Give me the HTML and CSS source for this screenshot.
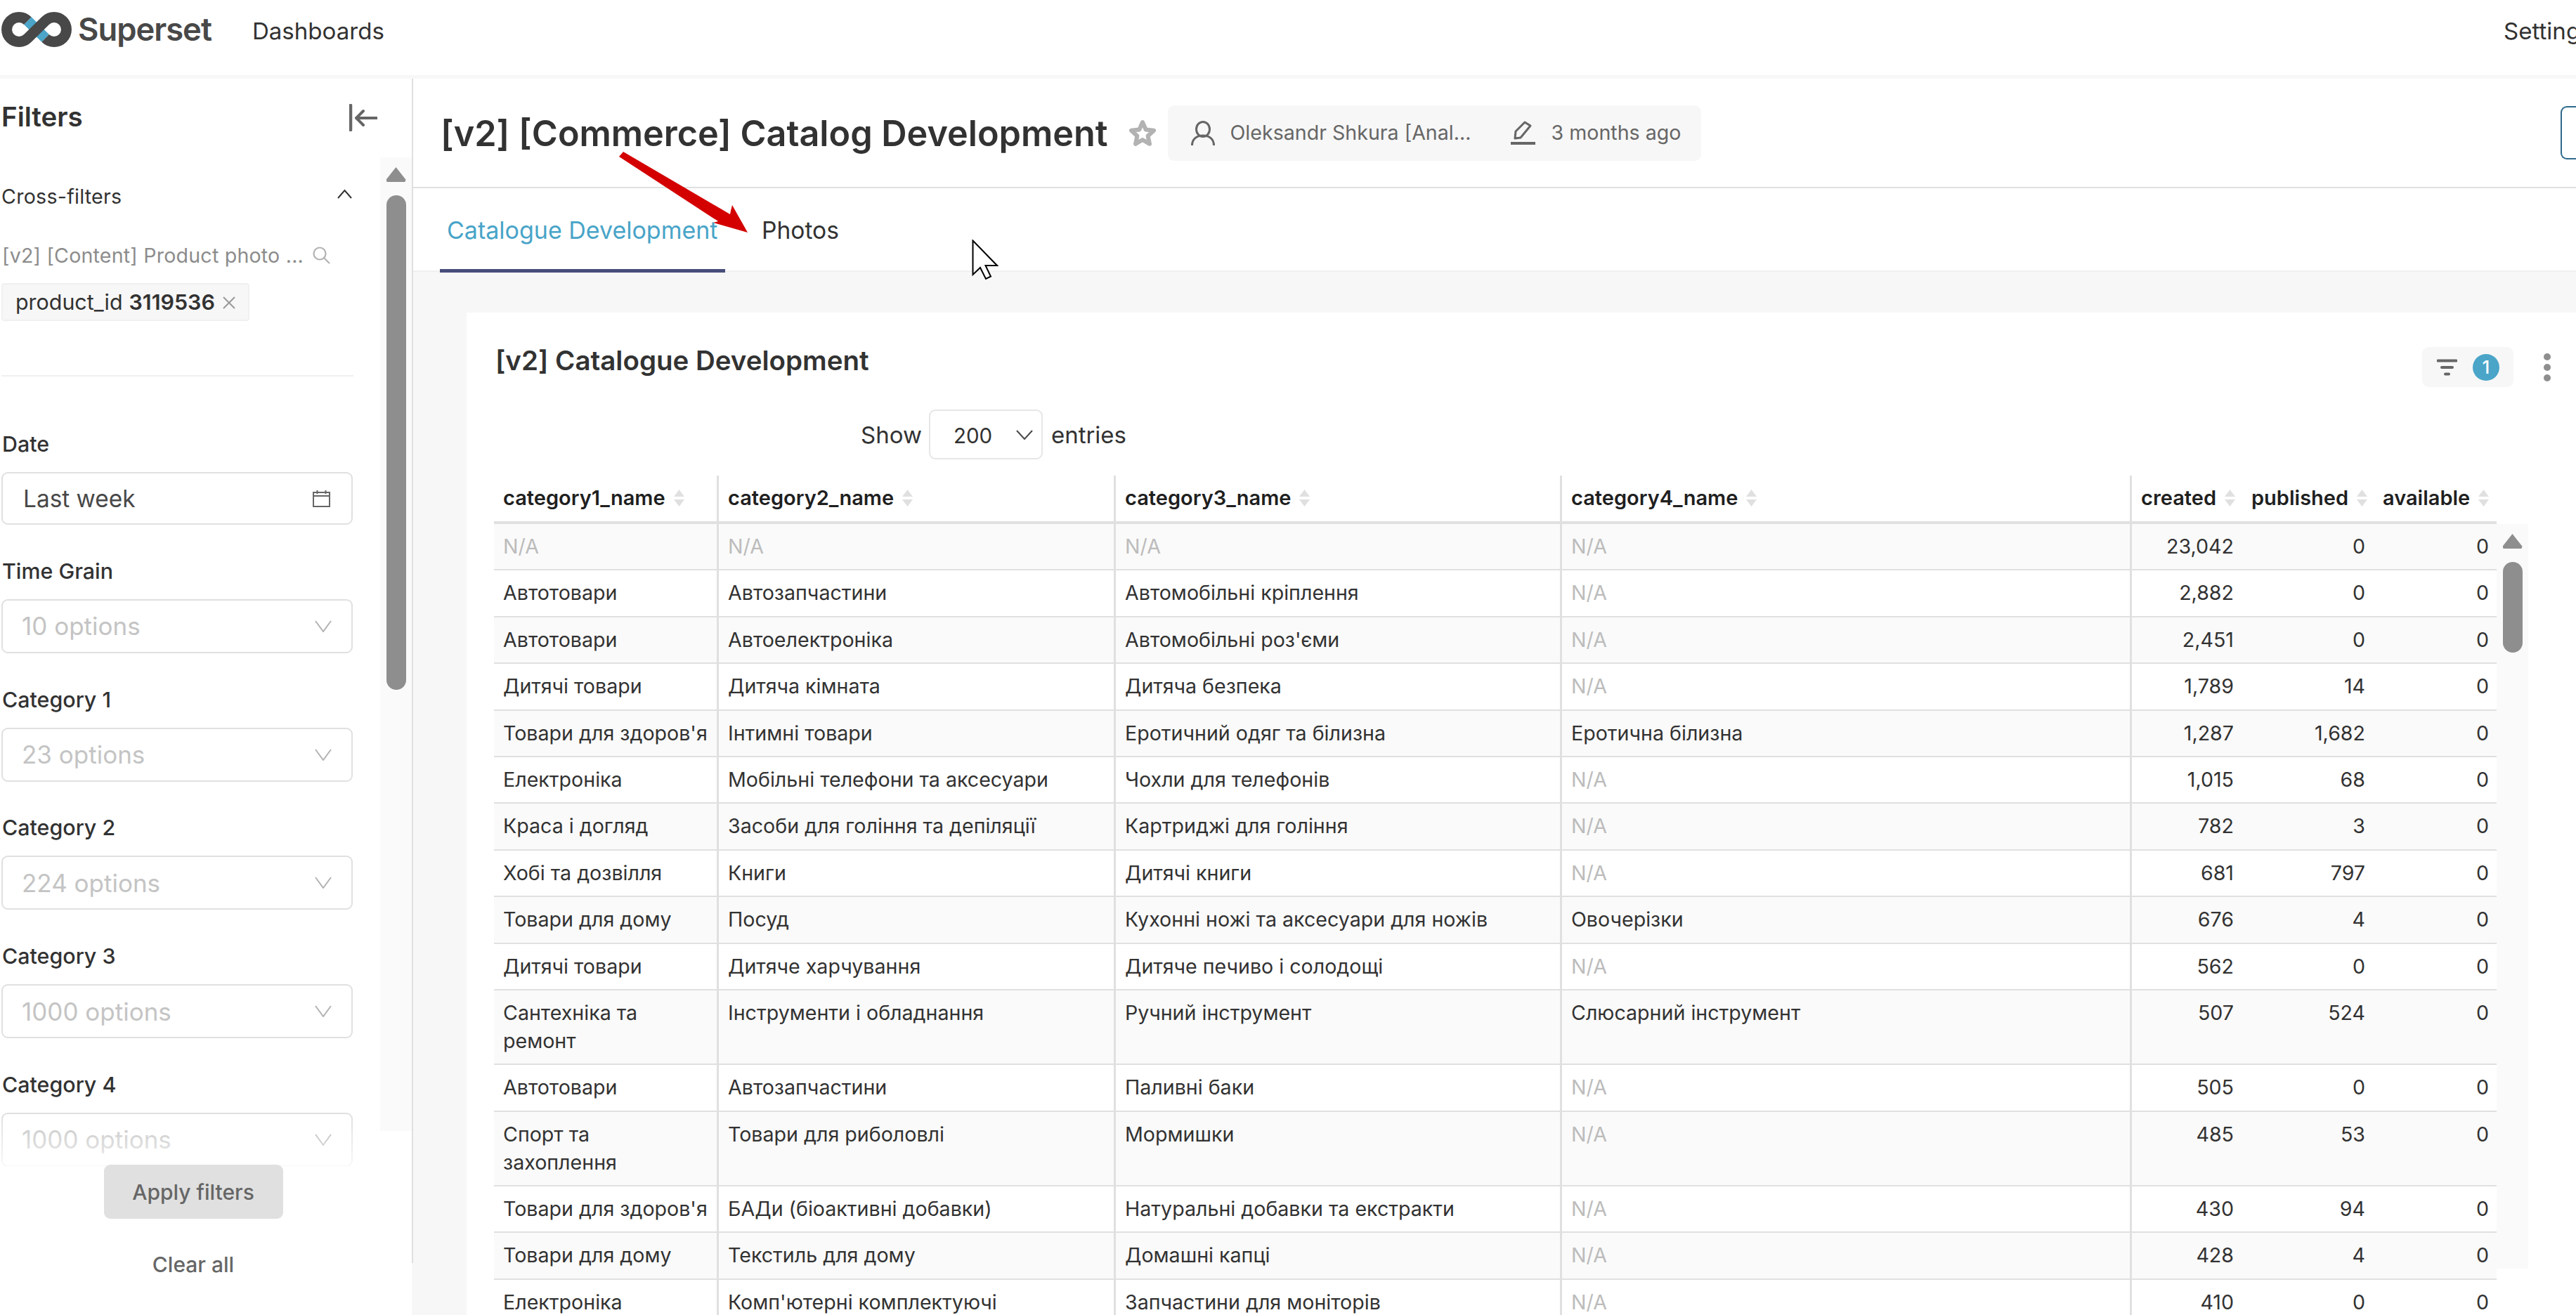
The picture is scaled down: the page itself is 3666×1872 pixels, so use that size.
FILE: index.html
```html
<!DOCTYPE html>
<html lang="en">
<head>
<meta charset="utf-8">
<title>[v2] [Commerce] Catalog Development</title>
<link rel="stylesheet" href="styles.css">
</head>
<body>
<nav class="nav">
  <div class="brand">
    <svg class="logo" viewBox="0 0 100 50" aria-hidden="true">
      <path class="logo-blue" d="M37.4 12.6L62.6 37.4"/>
      <path class="logo-dark" d="M37.4 12.6A17.5 17.5 0 1 0 37.4 37.4L62.6 12.6A17.5 17.5 0 1 1 62.6 37.4"/>
    </svg>
    <span class="brand-name">Superset</span>
  </div>
  <a class="nav-link">Dashboards</a>
  <a class="nav-settings">Settings</a>
</nav>
<div class="band"></div>
<div class="layout">
  <aside class="sidebar">
    <div class="fb-head">
      <h2 class="fb-title">Filters</h2>
      <svg class="ic-collapse" viewBox="0 0 40 39" aria-hidden="true">
        <path d="M2 2V37" class="s-bar"/>
        <path d="M39 20H12M20 10L10 20L20 30" class="s-arrow"/>
      </svg>
    </div>
    <div class="fb-body">
      <div class="fb-scroll">
        <div class="cf-row">
          <span>Cross-filters</span>
          <svg class="ic-caret" viewBox="0 0 21 14" aria-hidden="true"><path d="M1 13L10.5 2L20 13"/></svg>
        </div>
        <div class="cf-source">
          <span class="cf-source-text">[v2] [Content] Product photo ...</span>
          <svg class="ic-search" viewBox="0 0 25 25" aria-hidden="true"><circle cx="10" cy="10" r="8.5"/><path d="M16 16L24 24"/></svg>
        </div>
        <div class="chip">
          <span>product_id</span><b class="chip-val">3119536</b>
          <svg class="ic-x" viewBox="0 0 18 18" aria-hidden="true"><path d="M1 1L17 17M17 1L1 17"/></svg>
        </div>
        <div class="divider"></div>

        <div class="field field-date">
          <label class="field-label">Date</label>
          <div class="input input-date">
            <span>Last week</span>
            <svg class="ic-cal" viewBox="0 0 25 25" aria-hidden="true"><path d="M1 4H24V24H1ZM1 9H24M6.5 1V6M18.500 1V6"/></svg>
          </div>
        </div>
        <div class="field">
          <label class="field-label">Time Grain</label>
          <div class="input"><span class="ph">10 options</span><svg class="ic-chev" viewBox="0 0 24 17" aria-hidden="true"><path d="M1 1L12 16L23 1"/></svg></div>
        </div>
        <div class="field">
          <label class="field-label">Category 1</label>
          <div class="input"><span class="ph">23 options</span><svg class="ic-chev" viewBox="0 0 24 17" aria-hidden="true"><path d="M1 1L12 16L23 1"/></svg></div>
        </div>
        <div class="field">
          <label class="field-label">Category 2</label>
          <div class="input"><span class="ph">224 options</span><svg class="ic-chev" viewBox="0 0 24 17" aria-hidden="true"><path d="M1 1L12 16L23 1"/></svg></div>
        </div>
        <div class="field">
          <label class="field-label">Category 3</label>
          <div class="input"><span class="ph">1000 options</span><svg class="ic-chev" viewBox="0 0 24 17" aria-hidden="true"><path d="M1 1L12 16L23 1"/></svg></div>
        </div>
        <div class="field">
          <label class="field-label">Category 4</label>
          <div class="input"><span class="ph">1000 options</span><svg class="ic-chev" viewBox="0 0 24 17" aria-hidden="true"><path d="M1 1L12 16L23 1"/></svg></div>
        </div>
      </div>
      <div class="vscroll vscroll-side">
        <span class="vscroll-up"></span>
        <span class="vscroll-thumb vscroll-thumb-side"></span>
      </div>
    </div>
    <div class="fb-foot">
      <button class="btn-apply">Apply filters</button>
      <button class="btn-clear">Clear all</button>
    </div>
  </aside>
  <div class="rail"></div>
  <main class="main">
    <header class="head">
      <h1 class="title">[v2] [Commerce] Catalog Development</h1>
      <svg class="ic-star" viewBox="0 0 40 38" aria-hidden="true"><path d="M20 4L24.700 14.500L36 15.800L27.600 23.500L30 34.800L20 29L10 34.800L12.400 23.500L4 15.800L15.300 14.500Z"/></svg>
      <div class="meta">
        <svg class="ic-user" viewBox="0 0 34 35" aria-hidden="true"><ellipse cx="17" cy="12" rx="9.500" ry="10.500"/><path d="M1.500 35C1.500 26 8 21 17 21S32.500 26 32.500 35"/></svg>
        <span class="meta-name">Oleksandr Shkura [Anal...</span>
        <svg class="ic-pencil" viewBox="0 0 35 34" aria-hidden="true"><path class="pen" d="M6 25L7 15L20 2L28 7L14 24Z"/><path class="pen-line" d="M0 32H35"/></svg>
        <span class="meta-time">3 months ago</span>
      </div>
      <div class="edit-btn"></div>
    </header>
    <div class="tabs">
      <a class="tab tab-active">Catalogue Development</a>
      <a class="tab tab-photos">Photos</a>
    </div>
    <section class="canvas">
      <article class="card">
        <div class="card-head">
          <h3 class="card-title">[v2] Catalogue Development</h3>
          <div class="filter-pill">
            <svg class="ic-filter" viewBox="0 0 29 24" aria-hidden="true"><path d="M1.500 2.500H27.500M7 12H22M12 21.500H17"/></svg>
            <span class="badge">1</span>
          </div>
          <div class="kebab"><i></i><i></i><i></i></div>
        </div>
        <div class="show-row">
          <span>Show</span>
          <div class="page-select"><span>200</span><svg class="ic-chev-sm" viewBox="0 0 24 14" aria-hidden="true"><path d="M1 1L12 13L23 1"/></svg></div>
          <span>entries</span>
        </div>
        <div class="table-wrap">
          <table class="grid">
            <colgroup>
              <col class="c1"><col class="c2"><col class="c3"><col class="c4"><col class="c5"><col class="c6"><col class="c7">
            </colgroup>
            <thead>
              <tr>
                <th><span class="th-in">category1_name<svg class="ic-sort" viewBox="0 0 17 24" aria-hidden="true"><path d="M8.500 0L16 10H1ZM8.500 24L1 14H16Z"/></svg></span></th>
                <th class="vl"><span class="th-in">category2_name<svg class="ic-sort" viewBox="0 0 17 24" aria-hidden="true"><path d="M8.500 0L16 10H1ZM8.500 24L1 14H16Z"/></svg></span></th>
                <th class="vl"><span class="th-in">category3_name<svg class="ic-sort" viewBox="0 0 17 24" aria-hidden="true"><path d="M8.500 0L16 10H1ZM8.500 24L1 14H16Z"/></svg></span></th>
                <th class="vl"><span class="th-in">category4_name<svg class="ic-sort" viewBox="0 0 17 24" aria-hidden="true"><path d="M8.500 0L16 10H1ZM8.500 24L1 14H16Z"/></svg></span></th>
                <th class="vl"><span class="th-in">created<svg class="ic-sort" viewBox="0 0 17 24" aria-hidden="true"><path d="M8.500 0L16 10H1ZM8.500 24L1 14H16Z"/></svg></span></th>
                <th class="plain"><span class="th-in">published<svg class="ic-sort" viewBox="0 0 17 24" aria-hidden="true"><path d="M8.500 0L16 10H1ZM8.500 24L1 14H16Z"/></svg></span></th>
                <th class="plain"><span class="th-in">available<svg class="ic-sort" viewBox="0 0 17 24" aria-hidden="true"><path d="M8.500 0L16 10H1ZM8.500 24L1 14H16Z"/></svg></span></th>
              </tr>
            </thead>
            <tbody>
              <tr><td class="na">N/A</td><td class="vl na">N/A</td><td class="vl na">N/A</td><td class="vl na">N/A</td><td class="vl num">23,042</td><td class="num">0</td><td class="num">0</td></tr>
              <tr><td>Автотовари</td><td class="vl">Автозапчастини</td><td class="vl">Автомобільні кріплення</td><td class="vl na">N/A</td><td class="vl num">2,882</td><td class="num">0</td><td class="num">0</td></tr>
              <tr><td>Автотовари</td><td class="vl">Автоелектроніка</td><td class="vl">Автомобільні роз'єми</td><td class="vl na">N/A</td><td class="vl num">2,451</td><td class="num">0</td><td class="num">0</td></tr>
              <tr><td>Дитячі товари</td><td class="vl">Дитяча кімната</td><td class="vl">Дитяча безпека</td><td class="vl na">N/A</td><td class="vl num">1,789</td><td class="num">14</td><td class="num">0</td></tr>
              <tr><td>Товари для здоров'я</td><td class="vl">Інтимні товари</td><td class="vl">Еротичний одяг та білизна</td><td class="vl">Еротична білизна</td><td class="vl num">1,287</td><td class="num">1,682</td><td class="num">0</td></tr>
              <tr><td>Електроніка</td><td class="vl">Мобільні телефони та аксесуари</td><td class="vl">Чохли для телефонів</td><td class="vl na">N/A</td><td class="vl num">1,015</td><td class="num">68</td><td class="num">0</td></tr>
              <tr><td>Краса і догляд</td><td class="vl">Засоби для гоління та депіляції</td><td class="vl">Картриджі для гоління</td><td class="vl na">N/A</td><td class="vl num">782</td><td class="num">3</td><td class="num">0</td></tr>
              <tr><td>Хобі та дозвілля</td><td class="vl">Книги</td><td class="vl">Дитячі книги</td><td class="vl na">N/A</td><td class="vl num">681</td><td class="num">797</td><td class="num">0</td></tr>
              <tr><td>Товари для дому</td><td class="vl">Посуд</td><td class="vl">Кухонні ножі та аксесуари для ножів</td><td class="vl">Овочерізки</td><td class="vl num">676</td><td class="num">4</td><td class="num">0</td></tr>
              <tr><td>Дитячі товари</td><td class="vl">Дитяче харчування</td><td class="vl">Дитяче печиво і солодощі</td><td class="vl na">N/A</td><td class="vl num">562</td><td class="num">0</td><td class="num">0</td></tr>
              <tr><td>Сантехніка та ремонт</td><td class="vl">Інструменти і обладнання</td><td class="vl">Ручний інструмент</td><td class="vl">Слюсарний інструмент</td><td class="vl num">507</td><td class="num">524</td><td class="num">0</td></tr>
              <tr><td>Автотовари</td><td class="vl">Автозапчастини</td><td class="vl">Паливні баки</td><td class="vl na">N/A</td><td class="vl num">505</td><td class="num">0</td><td class="num">0</td></tr>
              <tr><td>Спорт та захоплення</td><td class="vl">Товари для риболовлі</td><td class="vl">Мормишки</td><td class="vl na">N/A</td><td class="vl num">485</td><td class="num">53</td><td class="num">0</td></tr>
              <tr><td>Товари для здоров'я</td><td class="vl">БАДи (біоактивні добавки)</td><td class="vl">Натуральні добавки та екстракти</td><td class="vl na">N/A</td><td class="vl num">430</td><td class="num">94</td><td class="num">0</td></tr>
              <tr><td>Товари для дому</td><td class="vl">Текстиль для дому</td><td class="vl">Домашні капці</td><td class="vl na">N/A</td><td class="vl num">428</td><td class="num">4</td><td class="num">0</td></tr>
              <tr><td>Електроніка</td><td class="vl">Комп'ютерні комплектуючі</td><td class="vl">Запчастини для моніторів</td><td class="vl na">N/A</td><td class="vl num">410</td><td class="num">0</td><td class="num">0</td></tr>
            </tbody>
          </table>
          <div class="vscroll vscroll-table">
            <span class="vscroll-up vscroll-up-table"></span>
            <span class="vscroll-thumb vscroll-thumb-table"></span>
          </div>
        </div>
      </article>
    </section>
  </main>
</div>

<svg class="annot-arrow" viewBox="0 0 200 130" aria-hidden="true">
  <polygon points="7,0 1,7 142,99 135,101 184,115 162,76 160,84 159,89"/>
</svg>
<svg class="annot-cursor" viewBox="0 0 38 58" aria-hidden="true">
  <path d="M1.500 1.500V50L12 40L20 56L27 52.500L19.500 37H36Z"/>
</svg>
</body>
</html>
```

FILE: styles.css
```css
* { box-sizing: border-box; }
html, body { margin: 0; padding: 0; }
body {
  width: 3666px;
  height: 1872px;
  overflow: hidden;
  position: relative;
  background: #fff;
  font-family: Inter, "Noto Sans", sans-serif;
  font-size: 28.6px;
  line-height: 40px;
  color: #323232;
}
h1, h2, h3 { margin: 0; }
svg { display: block; flex-shrink: 0; fill: none; }

/* top nav */
.nav { height: 107px; display: flex; align-items: center; padding-left: 2px; overflow: hidden; }
.brand { display: flex; align-items: center; margin-top: -24px; }
.logo { width: 100px; height: 50px; }
.logo-blue { stroke: #4aa5c8; stroke-width: 15px; }
.logo-dark { stroke: #484848; stroke-width: 15px; }
.brand-name { margin-left: 9px; font-size: 45.3px; line-height: 56px; font-weight: 600; color: #484848; letter-spacing: -1px; }
.nav-link { margin-left: 58px; margin-top: -19px; font-size: 33.1px; color: #323232; }
.nav-settings { margin-left: auto; margin-top: -19px; width: 103px; white-space: nowrap; font-size: 33.1px; color: #323232; }
.band { height: 5px; background: #f7f7f7; }

.layout { display: flex; height: 1760px; background: #f7f7f7; }

/* filter sidebar */
.sidebar { width: 586px; flex-shrink: 0; background: #fff; }
.rail { width: 2px; height: 1686px; background: #e0e0e0; flex-shrink: 0; }
.fb-head { height: 108px; display: flex; align-items: center; justify-content: space-between; padding: 0 49px 0 2px; }
.fb-title { font-size: 38.5px; line-height: 44px; font-weight: 600; color: #323232; }
.ic-collapse { width: 40px; height: 39px; margin-top: 2px; }
.s-bar { stroke: #666; stroke-width: 4.5px; stroke-linecap: round; }
.s-arrow { stroke: #666; stroke-width: 4px; stroke-linecap: round; stroke-linejoin: round; }
.fb-body { margin-top: 4px; height: 1436px; display: flex; align-items: flex-start; }
.fb-scroll { position: relative; width: 541px; height: 1436px; overflow: hidden; padding-left: 2px; }
.fb-scroll::after {
  content: "";
  position: absolute;
  left: 0; right: 0; bottom: 0;
  height: 72px;
  background: linear-gradient(rgba(255,255,255,0), rgba(255,255,255,.75));
}
.cf-row { margin-top: 36px; height: 40px; display: flex; align-items: center; justify-content: space-between; width: 499px; color: #323232; }
.cf-row span { margin-left: 0; letter-spacing: .25px; }
.ic-caret { width: 21px; height: 14px; margin-top: -8px; }
.ic-caret path { stroke: #323232; stroke-width: 2px; }
.cf-source { margin-top: 44px; height: 40px; display: flex; align-items: center; }
.cf-source-text { margin-left: 1px; width: 442px; color: #8c8c8c; white-space: nowrap; letter-spacing: .2px; }
.ic-search { width: 25px; height: 25px; margin-top: -1px; }
.ic-search circle, .ic-search path { stroke: #b2b2b2; stroke-width: 2.2px; }
.chip { margin-top: 19px; width: 353px; height: 54px; display: flex; align-items: center; padding-left: 18px; background: #f7f7f7; border: 2px solid #f0f0f0; border-radius: 4px; font-size: 30.4px; }
.chip-val { margin-left: 9px; font-weight: 600; color: #323232; }
.ic-x { width: 18px; height: 18px; margin-left: 11px; margin-top: 2px; }
.ic-x path { stroke: #999; stroke-width: 2px; }
.divider { margin-top: 77px; width: 501px; height: 2px; background: #f0f0f0; }

.field { margin-top: 45.750px; }
.field-date { margin-top: 76px; margin-bottom: 1.250px; }
.field-label { display: block; height: 40px; font-weight: 500; font-size: 30.4px; color: #323232; margin-left: 1px; }
.input { margin-top: 20px; width: 500px; height: 77px; display: flex; align-items: center; justify-content: space-between; padding: 0 28px 0 27px; background: #fff; border: 2.300px solid #e0e0e0; border-radius: 9px; font-size: 35px; }
.input-date { margin-top: 20px; height: 75px; padding-right: 30px; padding-left: 29px; color: #484848; font-size: 33.4px; }
.ph { color: #c4c4c4; }
.ic-cal { width: 25px; height: 25px; }
.ic-cal path { stroke: #666; stroke-width: 2px; }
.ic-chev { width: 24px; height: 17px; }
.ic-chev path { stroke: #b2b2b2; stroke-width: 2px; }

.vscroll { flex-shrink: 0; width: 45px; background: #fafafa; display: flex; flex-direction: column; align-items: center; }
.vscroll-side { height: 1386px; padding-top: 14px; }
.vscroll-up { width: 28px; height: 21px; background: #8e8e8e; clip-path: polygon(50% 0, 100% 85%, 96% 100%, 4% 100%, 0 85%); }
.vscroll-thumb { width: 28px; background: #8e8e8e; border-radius: 14px; }
.vscroll-thumb-side { margin-top: 19px; height: 704px; }

.fb-foot { position: relative; display: flex; flex-direction: column; align-items: center; margin-top: -2px; width: 550px; }
.btn-apply { width: 255px; height: 77px; border: 0; border-radius: 9px; background: #e0e0e0; color: #666; font: 500 30px/40px Inter, sans-serif; }
.btn-clear { margin-top: 45px; height: 40px; padding: 0; border: 0; background: none; color: #666; font: 500 30px/40px Inter, sans-serif; }

/* main */
.main { flex: 1; min-width: 0; display: flex; flex-direction: column; }
.head { height: 156px; flex-shrink: 0; background: #fff; border-bottom: 2px solid #e0e0e0; display: flex; align-items: center; padding-left: 39px; }
.title { font-size: 50.3px; line-height: 60px; font-weight: 600; color: #323232; white-space: nowrap; margin-top: 1px; }
.ic-star { width: 40px; height: 38px; margin-left: 30px; }
.ic-star path { stroke: #b2b2b2; stroke-width: 6px; stroke-linejoin: round; }
.meta { margin-left: 16px; width: 759px; height: 79px; background: #f7f7f7; border-radius: 9px; display: flex; align-items: center; padding-left: 33px; color: #666; }
.ic-user { width: 34px; height: 35px; }
.ic-user ellipse, .ic-user path { stroke: #666; stroke-width: 3px; }
.meta-name { margin-left: 21px; width: 400px; white-space: nowrap; }
.ic-pencil { width: 35px; height: 34px; }
.pen { stroke: #666; stroke-width: 3px; stroke-linejoin: round; }
.pen-line { stroke: #666; stroke-width: 4px; }
.meta-time { margin-left: 22px; white-space: nowrap; }
.edit-btn { margin-left: auto; width: 22px; height: 76px; border: 2px solid #2f6a8c; border-right: 0; border-radius: 9px 0 0 9px; }

.tabs { height: 119px; flex-shrink: 0; background: #fff; border-bottom: 2px solid #f0f0f0; display: flex; padding-left: 38px; }
.tab { position: relative; height: 117px; display: flex; align-items: center; padding: 3px 10px 0; font-size: 34px; white-space: nowrap; color: #323232; }
.tab-active { width: 406px; color: #48a4c8; }
.tab-active::after { content: ""; position: absolute; left: 0; right: 0; bottom: -3px; height: 5px; background: #484e7a; }
.tab-photos { margin-left: 42px; font-size: 33.6px; }

.canvas { flex: 1; min-height: 0; padding: 58px 0 0 76px; overflow: hidden; }
.card { background: #fff; height: 1500px; padding: 49px 37px 0 39px; }
.card-head { display: flex; align-items: flex-start; height: 57px; }
.card-title { margin-left: 2px; margin-top: -2px; font-size: 38.5px; line-height: 42px; font-weight: 600; color: #323232; }
.filter-pill { margin-left: auto; width: 130px; height: 57px; background: #f7f7f7; border-radius: 9px; display: flex; align-items: center; padding-left: 21px; }
.ic-filter { width: 29px; height: 24px; }
.ic-filter path { stroke: #666; stroke-width: 4px; stroke-linecap: round; }
.badge { margin-left: 22px; width: 38px; height: 38px; border-radius: 50%; background: #4aa5c8; color: #fff; font-size: 26px; line-height: 38px; text-align: center; font-weight: 500; }
.kebab { margin-left: 43px; width: 9px; height: 57px; display: flex; flex-direction: column; align-items: center; justify-content: center; gap: 5px; }
.kebab i { width: 10px; height: 10px; border-radius: 50%; background: #8e8e8e; flex-shrink: 0; }

.show-row { margin-top: 32px; height: 71px; display: flex; align-items: center; padding-left: 522px; font-size: 33px; color: #323232; }
.page-select { margin: 0 12px 0 10px; width: 162px; height: 71px; background: #fff; border: 2px solid #e6e6e6; border-radius: 9px; display: flex; align-items: center; justify-content: space-between; padding: 3px 12px 0 33px; font-size: 29.5px; }
.ic-chev-sm { width: 24px; height: 14px; margin-top: -3px; }
.ic-chev-sm path { stroke: #484848; stroke-width: 2px; }

.table-wrap { margin-top: 23px; display: flex; align-items: flex-start; }
.grid { table-layout: fixed; width: 2850px; border-collapse: separate; border-spacing: 0; flex-shrink: 0; }
.c1 { width: 317px; } .c2 { width: 565px; } .c3 { width: 635px; } .c4 { width: 811px; }
.c5 { width: 159px; } .c6 { width: 187px; } .c7 { width: 176px; }
.grid th { height: 69px; padding: 0 0 2px 13px; text-align: left; font-size: 29px; font-weight: 600; color: #1f1f1f; border-bottom: 4px solid #e0e0e0; white-space: nowrap; }
.grid th.vl { border-left: 3px solid #e0e0e0; padding-left: 13px; }
.grid th.plain { padding-left: 14px; }
.th-in { display: flex; align-items: center; }
.ic-sort { width: 17px; height: 24px; margin-left: 11px; }
.ic-sort path { fill: #e0e0e0; }
.grid td { padding: 12px 11.500px 12.400px 13px; vertical-align: top; border-bottom: 2px solid #e0e0e0; color: #323232; }
.grid td.vl { border-left: 3px solid #e0e0e0; padding-left: 13px; }
.grid td.na { color: #bcbcbc; }
.grid td.num { text-align: right; padding-right: 11px; }
.grid tbody tr:nth-child(odd) td { background: #fafafa; }

.vscroll-table { margin-top: 69px; height: 1060px; padding-top: 14px; }
.vscroll-thumb-table { margin-top: 19px; height: 129px; }

/* annotations drawn over the screenshot */
.annot-arrow { position: absolute; left: 880px; top: 216px; width: 200px; height: 130px; overflow: visible; }
.annot-arrow polygon { fill: #d40000; }
.annot-cursor { position: absolute; left: 1383px; top: 341px; width: 38px; height: 58px; }
.annot-cursor path { fill: #fff; stroke: #000; stroke-width: 2px; }
```
